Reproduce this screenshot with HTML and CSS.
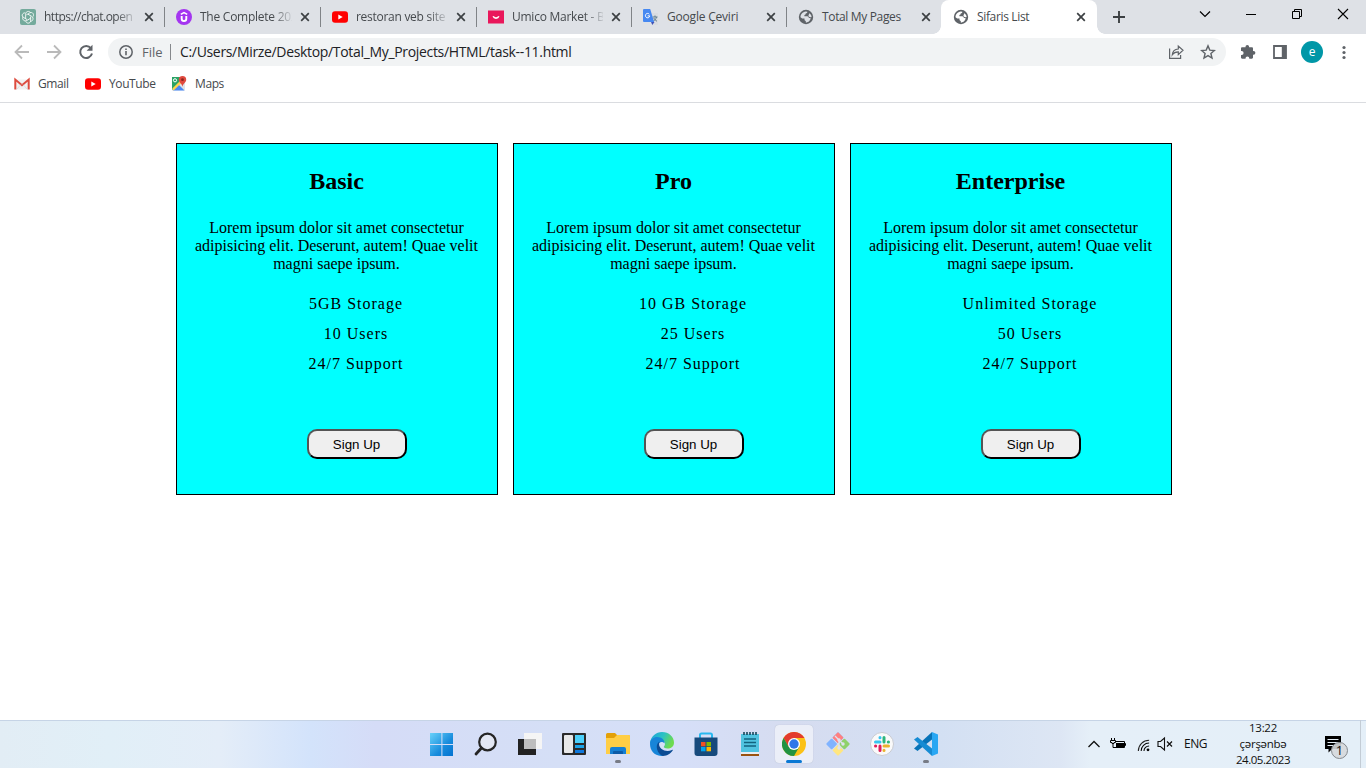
FILE: index.html
```html
<!DOCTYPE html>
<html lang="az">
<head>
<meta charset="utf-8">
<title>Sifaris List</title>
<link rel="stylesheet" href="styles.css">
</head>
<body>
<svg class="defs" width="0" height="0">
  <defs>
    <symbol id="x" viewBox="0 0 10 10"><path d="M1.200 1.200l7.600 7.600M8.800 1.200l-7.600 7.600" stroke="#3c4043" stroke-width="1.700" fill="none"/></symbol>
    <symbol id="yt" viewBox="0 0 16 16"><rect y="2.300" width="16" height="11.500" rx="3" fill="#f00"/><path d="M6.300 5.600v4.900L10.700 8z" fill="#fff"/></symbol>
    <symbol id="globe" viewBox="0 0 16 16"><circle cx="8" cy="8" r="7.200" fill="#5f6368"/><path d="M2.500 8.200C2.500 5.500 4.500 3 7.800 2.600l1.500.2c.2 1-.6 1.700-1.600 1.800 0 1-.4 1.400-1.300 1.500v1.200h2.800c1.200 0 1.600.8 1.600 1.700h1.700c.4 2-2 4.500-4.700 4.600v-1.700c-.8 0-1.300-.6-1.300-1.400V9.400H4.200z" fill="currentColor"/><path d="M11.200 4.200c1.400.8 2.300 2.100 2.400 3.800-1 .5-2.300.2-3-.7-.5-.8.400-1.500.6-3.100z" fill="currentColor"/></symbol>
  </defs>
</svg>

<header class="tabstrip">
  <div class="tab wide">
    <svg class="fav" viewBox="0 0 16 16"><rect width="16" height="16" rx="2" fill="#74aa9c"/><g fill="none" stroke="#fff" stroke-width=".8"><g id="k"><path d="M5.600 9.500V5.200c0-3.200 4.200-3.600 5-1.300"/><path d="M6.300 5.900L9.800 3.900c2.800-1.500 4.800 1.800 3.100 3.800"/></g><use href="#k" transform="rotate(120 8 8)"/><use href="#k" transform="rotate(240 8 8)"/></g></svg>
    <span class="label fade t0">https://chat.open</span><svg class="close"><use href="#x"/></svg>
  </div>
  <div class="tab wide">
    <svg class="fav" viewBox="0 0 16 16"><circle cx="8" cy="8" r="8" fill="#a435f0"/><path d="M5.700 7v2.700c0 3.100 4.600 3.100 4.600 0V7" fill="none" stroke="#fff" stroke-width="1.900"/><path d="M4.800 5.400L8 3.500l3.200 1.900" fill="none" stroke="#fff" stroke-width="1.500"/></svg>
    <span class="label fade t1">The Complete 202</span><svg class="close"><use href="#x"/></svg>
  </div>
  <div class="tab wide">
    <svg class="fav"><use href="#yt"/></svg>
    <span class="label fade t2">restoran veb site</span><svg class="close"><use href="#x"/></svg>
  </div>
  <div class="tab">
    <svg class="fav" viewBox="0 0 16 16"><path d="M0 1.500h16v13H0z" fill="#e9175b"/><path d="M5.200 7.200c1 2.500 4.600 2.500 5.600 0" fill="none" stroke="#fff" stroke-width="1.600"/></svg>
    <span class="label fade t3">Umico Market - B</span><svg class="close"><use href="#x"/></svg>
  </div>
  <div class="tab">
    <svg class="fav" viewBox="0 0 16 16"><path d="M6.500 4H15v12h-4z" fill="#dadce0"/><path d="M9.500 8h5M12 6.500V8m1.500 0c-.5 2-1.800 3.500-3.500 4.500M10.700 9c.8 1.500 2 2.500 3.300 3.300" stroke="#607d8b" fill="none" stroke-width="1"/><path d="M8 13h3.500L9.300 16z" fill="#3f51b5"/><path d="M1 0h6.200l3.900 13H1a1 1 0 0 1-1-1V1a1 1 0 0 1 1-1z" fill="#4688f1"/><path d="M6.300 5.200a2.200 2.200 0 1 0 .5 1.700H4.700" stroke="#fff" stroke-width="1" fill="none"/></svg>
    <span class="label t4">Google Çeviri</span><svg class="close"><use href="#x"/></svg>
  </div>
  <div class="tab last">
    <svg class="fav globe"><use href="#globe"/></svg>
    <span class="label t5">Total My Pages</span><svg class="close"><use href="#x"/></svg>
  </div>
  <div class="tab active">
    <svg class="fav globe"><use href="#globe"/></svg>
    <span class="label t6">Sifaris List</span><svg class="close"><use href="#x"/></svg>
  </div>
  <svg class="plus" viewBox="0 0 12 12"><path d="M6 0v12M0 6h12" stroke="#3c4043" stroke-width="1.900"/></svg>
  <div class="window-controls">
    <svg viewBox="0 0 12 12"><path d="M1 3.500l5 5 5-5" fill="none" stroke="#000" stroke-width="1.200"/></svg>
    <svg viewBox="0 0 12 12"><path d="M1 6.500h10" stroke="#000"/></svg>
    <svg viewBox="0 0 12 12"><path d="M1.500 3.500h7v7h-7zM3.500 3.500v-2h7v7h-2" fill="none" stroke="#000"/></svg>
    <svg viewBox="0 0 12 12"><path d="M1 1l10 10M11 1L1 11" stroke="#000" stroke-width="1.100"/></svg>
  </div>
</header>

<nav class="toolbar">
  <svg class="nav-icon" viewBox="0 0 16 16"><path d="M15 8H2M8 1.500L1.500 8 8 14.500" fill="none" stroke="#bababa" stroke-width="1.800"/></svg>
  <svg class="nav-icon" viewBox="0 0 16 16"><path d="M1 8h13M8 1.500L14.500 8 8 14.500" fill="none" stroke="#bababa" stroke-width="1.800"/></svg>
  <svg class="nav-icon" viewBox="0 0 16 16"><path d="M12.900 4.200A6 6 0 1 0 14 9.600" fill="none" stroke="#5f6368" stroke-width="2"/><path d="M14.500.8v6H8.600z" fill="#5f6368"/></svg>
  <div class="omnibox">
    <svg class="info" viewBox="0 0 16 16"><circle cx="8" cy="8" r="6.200" fill="none" stroke="#5f6368" stroke-width="1.500"/><path d="M8 7v4.300M8 4.400V6" stroke="#5f6368" stroke-width="1.600"/></svg>
    <span class="scheme">File</span><span class="divider"></span>
    <span class="url">C:/Users/Mirze/Desktop/Total_My_Projects/HTML/task--11.html</span>
    <svg class="share" viewBox="0 0 16 16"><path d="M1.600 4.500v9.800h11V11" fill="none" stroke="#5f6368" stroke-width="1.200"/><path d="M4.300 10.700c.3-3.700 2.300-5.500 6-5.700V2l4.700 4.300-4.700 4.300V7.900c-2.900 0-4.600.7-6 2.800z" fill="none" stroke="#5f6368" stroke-width="1.200"/></svg>
    <svg class="star" viewBox="0 0 16 16"><path d="M8 1.900l1.800 4.200 4.600.4-3.500 3 1.100 4.500-4-2.400-4 2.400 1.100-4.500-3.500-3 4.600-.4z" fill="none" stroke="#5f6368" stroke-width="1.400"/></svg>
  </div>
  <div class="actions">
    <svg viewBox="0 0 16 16"><path d="M5.500 3.200V2.700a1.800 1.800 0 0 1 3.600 0v.5h2.700c.7 0 1.200.5 1.200 1.200v2.500h.5a1.900 1.900 0 0 1 0 3.800H13v2.900c0 .7-.5 1.200-1.200 1.200H9.300v-.4a1.900 1.900 0 0 0-3.800 0v.4H2.200c-.7 0-1.200-.5-1.200-1.200v-2.600h.6a2 2 0 0 0 0-4H1V4.400c0-.7.500-1.200 1.200-1.200z" fill="#5f6368"/></svg>
    <svg viewBox="0 0 16 16"><path d="M2 2h12v12H2z" fill="none" stroke="#5f6368" stroke-width="1.800"/><path d="M9.800 2H14v12H9.800z" fill="#5f6368"/></svg>
    <span class="avatar">e</span>
    <svg viewBox="0 0 16 16"><g fill="#5f6368"><circle cx="8" cy="3.500" r="1.600"/><circle cx="8" cy="8.500" r="1.600"/><circle cx="8" cy="13.500" r="1.600"/></g></svg>
  </div>
</nav>

<div class="bookmarks">
  <svg class="fav" viewBox="0 0 16 16"><path d="M2 3.500h12v10H2z" fill="#f1f1f1"/><path d="M1.300 13.500V3.600L8 9.200l6.700-5.600v9.900" fill="none" stroke="#dd4b3e" stroke-width="2"/><path d="M2.500 13.500L7 8.500m6.500 5L9 8.500" stroke="#d5d5d5" stroke-width=".7"/></svg>
  <span class="b1">Gmail</span>
  <svg class="fav"><use href="#yt"/></svg>
  <span class="b2">YouTube</span>
  <svg class="fav" viewBox="0 0 16 16"><path d="M1 1h13v13.500H1z" fill="#dfe3e8"/><path d="M1 1h9L8 7l-7 7z" fill="#2ba365"/><path d="M7.500 8.500l6 6H2z" fill="#4a89f3"/><path d="M1.300 12.500L9 5l1.500 2-8 7.500z" fill="#ffd44c"/><circle cx="4" cy="4.300" r="1.600" fill="none" stroke="#fff"/><path d="M11.500 0a3.700 3.700 0 0 0-3.700 3.800c0 2.500 3 3.600 3.700 7 .7-3.400 3.700-4.500 3.700-7A3.700 3.700 0 0 0 11.500 0z" fill="#e04a3f"/><circle cx="11.500" cy="3.700" r="1.400" fill="#8c261f"/></svg>
  <span class="b3">Maps</span>
</div>

<main class="plans">
  <section class="plan">
    <h2>Basic</h2>
    <p>Lorem ipsum dolor sit amet consectetur adipisicing elit. Deserunt, autem! Quae velit magni saepe ipsum.</p>
    <ul><li>5GB Storage</li><li>10 Users</li><li>24/7 Support</li></ul>
    <button>Sign Up</button>
  </section>
  <section class="plan">
    <h2>Pro</h2>
    <p>Lorem ipsum dolor sit amet consectetur adipisicing elit. Deserunt, autem! Quae velit magni saepe ipsum.</p>
    <ul><li>10 GB Storage</li><li>25 Users</li><li>24/7 Support</li></ul>
    <button>Sign Up</button>
  </section>
  <section class="plan">
    <h2>Enterprise</h2>
    <p>Lorem ipsum dolor sit amet consectetur adipisicing elit. Deserunt, autem! Quae velit magni saepe ipsum.</p>
    <ul><li>Unlimited Storage</li><li>50 Users</li><li>24/7 Support</li></ul>
    <button>Sign Up</button>
  </section>
</main>

<footer class="taskbar">
  <div class="apps">
    <div class="app"><svg viewBox="0 0 24 24"><defs><linearGradient id="win" x1="0" y1="0" x2="24" y2="24" gradientUnits="userSpaceOnUse"><stop stop-color="#6bd4fb"/><stop offset=".6" stop-color="#178bdc"/><stop offset="1" stop-color="#0271d0"/></linearGradient></defs><path d="M0 1h11.400v11H0zM12.400 1H23v11H12.400zM0 13h11.400v11H0zM12.400 13H23v11H12.400z" fill="url(#win)"/></svg></div>
    <div class="app"><svg viewBox="0 0 24 24"><circle cx="13.500" cy="10" r="8.300" fill="#e3e7f3" stroke="#252525" stroke-width="2.200"/><path d="M7.500 16L2 22" stroke="#252525" stroke-width="2.800" stroke-linecap="round"/></svg></div>
    <div class="app"><svg viewBox="0 0 24 24"><path d="M0 7h18v16H0z" fill="#222"/><path d="M6 1h18v16H6z" fill="#f5f5f5"/><path d="M6 7h12v10H6z" fill="#bdbdbd"/></svg></div>
    <div class="app"><svg viewBox="0 0 24 24"><rect y="1" width="24" height="22" rx="1" fill="#2a2a2a"/><rect x="2" y="3" width="9" height="18" rx="1" fill="#e8e8e8"/><path d="M13 3h9v8h-9z" fill="#4cd0fb"/><path d="M13 13h9v3h-9z" fill="#1ba3e8"/><path d="M13 18h9v3h-9z" fill="#1079dc"/></svg></div>
    <div class="app running"><svg viewBox="0 0 24 24"><path d="M0 2.500Q0 1 1.500 1H9l2 2h11.500Q24 3 24 4.500V10H0z" fill="#e3a008"/><path d="M0 6h8l3-3h11.500Q24 3 24 4.500V22H0z" fill="#ffce45"/><path d="M4 22v-5q0-2 2-2h12q2 0 2 2v5z" fill="#1680d3"/><path d="M7 22v-2q0-1 1-1h8q1 0 1 1v2z" fill="#0d5ca8"/></svg></div>
    <div class="app"><svg viewBox="0 0 24 24"><defs><linearGradient id="eg" x1="0" y1="0" x2="1" y2=".4"><stop stop-color="#1aa1dd"/><stop offset=".55" stop-color="#2cc2c4"/><stop offset="1" stop-color="#6edb4f"/></linearGradient></defs><path d="M0 11C1 4 6 0 12 0c7 0 12 5 12 10.500 0 4-3 6-6.500 6-3 0-4-1.200-3.600-2 2-2 1.500-6-3.400-6C5 8.500 0 12 0 11z" fill="url(#eg)"/><path d="M0 12c0-5 4-7 7-7 5 0 8 3.500 7.500 6.500-2-3-6.500-1.500-6.500 3C8 20 13 24 13 24 5 24.500 0 19 0 12z" fill="#1785d8"/><path d="M9.600 9.500C5 12 6 21 12.500 24c4.500.1 8.300-2.400 10.200-5.500.3-.6-.3-.9-.8-.6-6.700 3.300-15-2-12.300-8.400z" fill="#0c4c94"/></svg></div>
    <div class="app"><svg viewBox="0 0 24 24"><path d="M6 7V3q0-1.500 1.500-1.500h9Q18 1.500 18 3v4" fill="none" stroke="#28b8ef" stroke-width="2"/><path d="M.5 5.500h23V21q0 3-3 3h-17q-3 0-3-3z" fill="#174a7c"/><path d="M7 10h4.500v4.300H7z" fill="#f25022"/><path d="M12.500 10H17v4.300h-4.500z" fill="#7fba00"/><path d="M7 15h4.500v4.300H7z" fill="#00a4ef"/><path d="M12.500 15H17v4.300h-4.500z" fill="#ffb900"/></svg></div>
    <div class="app"><svg viewBox="0 0 24 24"><path d="M3 2h18v18H3z" fill="#50c3e0"/><path d="M3 20h18v2H3z" fill="#e8eef2"/><path d="M3 22h18v2H3z" fill="#9a5310"/><path d="M6 7h12M6 10.500h12M6 14h12" stroke="#12637f" stroke-width="1.500"/><path d="M6 0v3M9 0v3M12 0v3M15 0v3M18 0v3" stroke="#16485c" stroke-width="1.600"/></svg></div>
    <div class="app current"><svg viewBox="0 0 24 24"><circle cx="12" cy="12" r="12" fill="#fbc116"/><path d="M1.600 6A12 12 0 0 1 22.400 6H12v6l-5.200 3z" fill="#e33b2e"/><path d="M1.600 6A12 12 0 0 0 12 24l5.200-9H6.800z" fill="#229342"/><circle cx="12" cy="12" r="6" fill="#fff"/><circle cx="12" cy="12" r="4.700" fill="#2f76e8"/></svg></div>
    <div class="app"><svg viewBox="0 0 24 24"><g transform="rotate(45 12 12)"><rect x="3.500" y="3.500" width="8" height="8" rx="1" fill="#80b3ff"/><rect x="3.500" y="3.500" width="8" height="8" rx="1" fill="#ff8080"/><rect x="12.500" y="3.500" width="8" height="8" rx="1" fill="#8fd16b"/><rect x="3.500" y="12.500" width="8" height="8" rx="1" fill="#80b3ff"/><rect x="12.500" y="12.500" width="8" height="8" rx="1" fill="#ffe680"/></g><path d="M9 4l4 4v8M13 8l4 4" fill="none" stroke="#dfe2ef" stroke-width="1.300"/><g fill="#dfe2ef"><circle cx="13" cy="8" r="1.700"/><circle cx="17" cy="12" r="1.700"/><circle cx="13" cy="16" r="1.700"/></g></svg></div>
    <div class="app"><svg viewBox="0 0 24 24"><circle cx="12" cy="12" r="11.500" fill="#fafafa" stroke="#c8cbd2"/><g stroke-width="3" stroke-linecap="round"><path d="M10 5.500v.2M5.500 10H10" stroke="#36c5f0"/><path d="M14 5.500V10M18.300 10h.2" stroke="#2eb67d"/><path d="M10 14v4.500M5.500 14h.2" stroke="#e01e5a"/><path d="M14 14h4.500M14 18.300v.2" stroke="#ecb22e"/></g></svg></div>
    <div class="app running"><svg viewBox="0 0 24 24"><path d="M18 0v7.500L3.500 19 0 16.500z" fill="#0873b8"/><path d="M0 7.500L3.500 5 18 16.500V24z" fill="#168bd3"/><path d="M18 0l6 2.500v19L18 24z" fill="#29a7f3"/></svg></div>
  </div>
  <div class="tray">
    <svg class="chev" viewBox="0 0 12 12"><path d="M.5 9L6 3.500 11.500 9" fill="none" stroke="#111" stroke-width="1.300"/></svg>
    <svg class="batt" viewBox="0 0 16 16"><path d="M5.500 5.500h9v6h-9M14.500 7.500h1v2h-1" fill="none" stroke="#000"/><path d="M6 7h8v4H6z"/><path d="M1.500 2v2M4.500 2v2M.5 4.500h5v2H4v1H2v-1H.5zM3 8v3.500h3" fill="none" stroke="#000"/></svg>
    <svg class="wifi" viewBox="0 0 16 16"><g fill="none" stroke="#000" stroke-width="1.100"><path d="M5.500 15A8.500 8.500 0 0 1 14 6.500"/><path d="M8.500 15A5.500 5.500 0 0 1 14 9.500"/><path d="M2.500 15A11.500 11.500 0 0 1 14 3.500" stroke="#222"/></g><circle cx="12.800" cy="13.700" r="1.500"/></svg>
    <svg class="vol" viewBox="0 0 16 16"><path d="M1 5.500h2.500l4-3.500v12l-4-3.500H1z" fill="none" stroke="#111" stroke-width="1.100"/><path d="M10 5.500l5 5M15 5.500l-5 5" stroke="#111" stroke-width="1.200"/></svg>
    <span class="lang">ENG</span>
    <div class="clock"><span>13:22</span><span>çərşənbə</span><span class="date">24.05.2023</span></div>
    <div class="notify"><svg viewBox="0 0 18 18"><path d="M1 1h16v13H8l-3.500 3.500V14H1z"/><path d="M3.500 4.500h11M3.500 7.500h11M3.500 10.500h7" stroke="#e6f0f8"/></svg><span class="badge">1</span></div>
    <span class="edge"></span>
  </div>
</footer>
</body>
</html>
```

FILE: styles.css
```css
* { box-sizing: border-box; }
body {
  margin: 0;
  height: 768px;
  display: flex;
  flex-direction: column;
  overflow: hidden;
  background: #fff;
  font-family: "Liberation Serif", serif;
}
svg { display: block; flex: none; }
.defs { position: absolute; }

/* tab strip */
.tabstrip {
  height: 34px;
  flex: none;
  display: flex;
  padding-left: 8px;
  background: #dee1e6;
  font: 12px "Open Sans", sans-serif;
  color: #45494d;
}
.tab {
  width: 155px;
  flex: none;
  height: 34px;
  padding-left: 12px;
  display: flex;
  align-items: center;
  position: relative;
}
.tab.wide { width: 156px; }
.tab:not(.last):not(.active)::after {
  content: "";
  position: absolute;
  right: -1px;
  top: 7px;
  width: 1px;
  height: 20px;
  background: #808387;
}
.tab.active { width: 156px; background: #fff; border-radius: 8px 8px 0 0; }
.tab.active::before, .tab.active::after {
  content: "";
  position: absolute;
  bottom: 0;
  width: 8px;
  height: 8px;
}
.tab.active::before { left: -8px; background: radial-gradient(circle at 0 0, #dee1e6 7.500px, #fff 8px); }
.tab.active::after { right: -8px; background: radial-gradient(circle at 100% 0, #dee1e6 7.500px, #fff 8px); }
.fav { width: 16px; height: 16px; }
.globe { color: #dee1e6; }
.active .globe { color: #fff; }
.label {
  width: 91px;
  margin: 0 8px;
  white-space: nowrap;
  line-height: 20px;
  letter-spacing: -.35px;
}
.wide .label { width: 92px; }
.fade {
  -webkit-mask-image: linear-gradient(90deg, #000 72px, transparent 94px);
  mask-image: linear-gradient(90deg, #000 72px, transparent 94px);
}
.t0 { letter-spacing: -.5px; }
.t1, .t3 { letter-spacing: -.25px; }
.t2 { letter-spacing: -.28px; }
.t4 { letter-spacing: -.2px; }
.close { width: 10px; height: 10px; }
.plus { width: 12px; height: 12px; margin: 11px 0 0 16px; }
.window-controls { display: flex; gap: 34px; margin: 8px 17px 0 auto; }
.window-controls svg { width: 12px; height: 12px; }

/* toolbar */
.toolbar {
  height: 36px;
  flex: none;
  display: flex;
  align-items: center;
  gap: 16px;
  padding-left: 14px;
}
.nav-icon { width: 16px; height: 16px; }
.omnibox {
  width: 1118px;
  margin-left: -2px;
  height: 28px;
  border-radius: 14px;
  background: #f1f3f4;
  display: flex;
  align-items: center;
  padding: 0 10px;
  font: 14px "Open Sans", sans-serif;
  color: #202124;
}
.info { width: 16px; height: 16px; margin-right: 8px; }
.scheme { width: 28px; color: #5f6368; font-size: 13px; }
.divider { width: 1px; height: 16px; background: #85888c; margin-right: 9px; }
.url { letter-spacing: -.33px; white-space: nowrap; padding-bottom: 1px; }
.share { width: 16px; height: 16px; margin-left: auto; }
.star { width: 16px; height: 16px; margin-left: 16px; }
.actions { display: flex; align-items: center; gap: 13px; margin-left: -2px; }
.actions svg { width: 16px; height: 16px; }
.actions svg:first-child { margin-right: 3px; }
.avatar {
  width: 22px;
  height: 22px;
  border-radius: 50%;
  background: #0097a7;
  color: #fff;
  font: 12px/21px "Open Sans", sans-serif;
  text-align: center;
}

/* bookmarks */
.bookmarks {
  height: 33px;
  flex: none;
  display: flex;
  align-items: center;
  padding: 0 0 4px 14px;
  border-bottom: 1px solid #dadce0;
  font: 12px "Open Sans", sans-serif;
  color: #45494d;
}
.bookmarks span { margin-left: 8px; letter-spacing: -.4px; padding-bottom: 1px; }
.b1 { width: 47px; }
.b2 { width: 62px; }

/* pricing */
.plans {
  flex: 1;
  display: flex;
  align-items: flex-start;
  gap: 15px;
  padding: 40px 0 0 176px;
}
.plan {
  width: 322px;
  height: 352px;
  flex: none;
  padding: 4px 16px 0 15px;
  border: 1px solid #000;
  background: cyan;
  text-align: center;
  color: #000;
}
.plan h2 { margin: 20px 0 24px; font-size: 24px; line-height: 27px; }
.plan p { margin: 0; font-size: 16px; line-height: 18px; }
.plan ul { list-style: none; margin: 16px 0 0; padding: 0 0 0 39px; letter-spacing: 1px; line-height: 30px; }
.plan button {
  display: block;
  width: 100px;
  height: 30px;
  margin: 50px 0 0 115px;
  padding: 0 1px 0 0;
  border: 2px outset #000;
  border-radius: 10px;
  background: #efefef;
  color: #000;
  font: 13.333px "Liberation Sans", Arial, sans-serif;
}

/* taskbar */
.taskbar {
  height: 48px;
  flex: none;
  display: flex;
  justify-content: space-between;
  padding-left: 420px;
  box-shadow: inset 0 1px #c6d4e6;
  background: linear-gradient(90deg, #e2edf5 0, #e1eff7 110px, #e4edf8 220px, #d3e3fb 310px, #d5dcf7 375px, #d5dff6 560px, #d6dff8 680px, #d6dcf0 790px, #d3e0f3 940px, #dde6f4 1060px, #e5eff8 1090px, #e4eff8 1366px);
}
.apps { display: flex; }
.app {
  width: 44px;
  height: 48px;
  display: flex;
  align-items: center;
  justify-content: center;
  position: relative;
}
.app svg { width: 24px; height: 24px; position: relative; }
.running::after, .current::after {
  content: "";
  position: absolute;
  bottom: 5px;
  width: 6px;
  height: 3px;
  border-radius: 2px;
  background: #777b85;
}
.current::after { width: 16px; background: #0a78d4; }
.current::before {
  content: "";
  position: absolute;
  top: 5px;
  left: 3px;
  width: 38px;
  height: 38px;
  border-radius: 4px;
  background: #ebeef8;
  box-shadow: 0 0 1px #a9b0c4;
}
.tray {
  width: 278px;
  display: flex;
  align-items: center;
  font: 12px/16px "Open Sans", sans-serif;
  color: #111;
}
.chev { width: 12px; height: 12px; }
.batt { width: 16px; height: 16px; margin-left: 10px; }
.wifi { width: 15px; height: 15px; margin-left: 10px; }
.vol { width: 16px; height: 16px; margin-left: 6px; }
.lang { width: 24px; margin-left: 11px; letter-spacing: -.5px; }
.clock {
  width: 70px;
  margin-left: 20px;
  display: flex;
  flex-direction: column;
  text-align: center;
  font-size: 11.5px;
  letter-spacing: -.3px;
}
.clock span { white-space: nowrap; }
.clock .date { letter-spacing: -.45px; }
.notify { width: 24px; height: 24px; margin-left: 26px; position: relative; }
.notify svg { width: 18px; height: 18px; margin-top: 3px; }
.badge {
  position: absolute;
  left: 7px;
  top: 10px;
  width: 17px;
  height: 17px;
  border: 1px solid #85898e;
  border-radius: 50%;
  background: #d5d8dce6;
  font-size: 13px;
  line-height: 15px;
  text-align: center;
}
.edge { width: 1px; height: 48px; margin-left: 12px; background: #c3ccd5; }
```
